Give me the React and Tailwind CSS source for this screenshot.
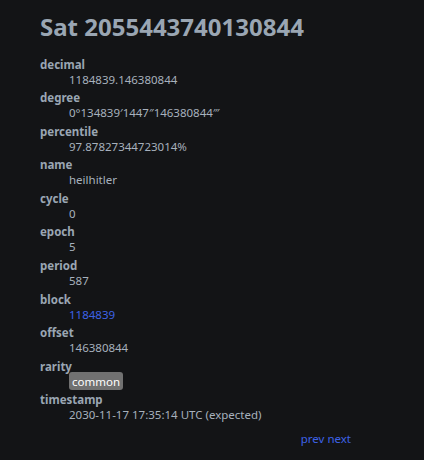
const rows = [
  { label: 'decimal', value: '1184839.146380844' },
  { label: 'degree', value: '0°134839′1447″146380844‴' },
  { label: 'percentile', value: '97.87827344723014%' },
  { label: 'name', value: 'heilhitler' },
  { label: 'cycle', value: '0' },
  { label: 'epoch', value: '5' },
  { label: 'period', value: '587' },
  { label: 'block', value: '1184839', link: true },
  { label: 'offset', value: '146380844' },
  { label: 'rarity', value: 'common', badge: true },
  { label: 'timestamp', value: '2030-11-17 17:35:14 UTC (expected)' },
];

export default function App() {
  return (
    <div
      className="min-h-[460px] w-full bg-[#131416] px-[40px] pt-[13px] text-[#9ca8b5]"
      style={{ fontFamily: '"Noto Sans", "Open Sans", sans-serif' }}
    >
      <h1 className="text-[24px] font-bold leading-[28px] text-[#9aa6b3]">
        Sat 2055443740130844
      </h1>
      <dl className="mt-[16.5px]">
        {rows.map(row => (
          <div key={row.label}>
            <dt className="text-[11.5px] font-bold leading-[14px] text-[#9aa6b3]">{row.label}</dt>
            <dd className="mb-[4.6px] ml-[29px] text-[11.5px] leading-[15px] text-[#a7b1bd]">
              {row.link ? (
                <a href="#" className="text-[#3d62e6]">{row.value}</a>
              ) : row.badge ? (
                <span className="rounded-[3px] bg-[#717171] px-[3px] py-[1.5px] text-white">
                  {row.value}
                </span>
              ) : (
                row.value
              )}
            </dd>
          </div>
        ))}
      </dl>
      <nav className="mt-[9px] flex justify-end pr-[33px] text-[11.5px] leading-[15px] text-[#3d62e6]">
        <a href="#">prev</a>
        <a href="#" className="ml-[3px]">next</a>
      </nav>
    </div>
  );
}
